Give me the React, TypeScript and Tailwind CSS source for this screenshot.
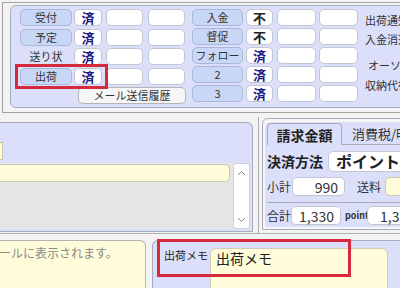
import React from 'react';

const FONT = { fontFamily: '"Noto Sans CJK JP", "Noto Sans", sans-serif' };

function Btn({ label, w }: { label: string; w: string }) {
  return (
    <div className={`${w} h-[17px] shrink-0 rounded-[5px] border border-[#a9b8d8] bg-[#c9d7f6] flex items-center justify-center text-[11px] leading-none text-[#333]`}>
      {label}
    </div>
  );
}

function Box({ w, children }: { w: string; children?: React.ReactNode }) {
  return (
    <div className={`${w} h-[17px] shrink-0 rounded-[5px] border border-[#c4c6d2] bg-white flex items-center justify-center`}>
      {children}
    </div>
  );
}

function Sumi() {
  return <span className="text-[13px] font-bold leading-none text-[#1b1b86]">済</span>;
}

function Fu() {
  return <span className="text-[13px] font-bold leading-none text-[#222]">不</span>;
}

const LEFT_ROWS: { label: string; plain?: boolean }[] = [
  { label: '受付' },
  { label: '予定' },
  { label: '送り状', plain: true },
  { label: '出荷' },
];

const RIGHT_ROWS: { label: string; mark: 'sumi' | 'fu' }[] = [
  { label: '入金', mark: 'fu' },
  { label: '督促', mark: 'fu' },
  { label: 'フォロー', mark: 'sumi' },
  { label: '2', mark: 'sumi' },
  { label: '3', mark: 'sumi' },
];

export default function App() {
  return (
    <div className="relative w-[400px] h-[288px] overflow-hidden bg-[#f3f3f3] text-[12px] text-[#333]" style={FONT}>
      {/* top status frame */}
      <div className="h-[113px] pt-[2px] pl-[2px]">
        <div className="h-[111px] w-[420px] border-t border-l border-b border-[#a3a3a3] pl-[7px] pt-[2px]">
          <div className="h-[103px] w-[420px] rounded-[6px] border border-[#a9abbd] bg-[#dcdffa] pl-[9px] pt-[3px] flex">
            {/* left group */}
            <div className="flex flex-col gap-[2.5px] w-[165px] shrink-0">
              {LEFT_ROWS.map((r) => (
                <div key={r.label} className="flex items-center">
                  {r.plain ? (
                    <div className="w-[52px] h-[17px] shrink-0 flex items-center justify-center text-[11px] leading-none">{r.label}</div>
                  ) : (
                    <Btn label={r.label} w="w-[52px]" />
                  )}
                  <div className="ml-[2px]"><Box w="w-[28px]"><Sumi /></Box></div>
                  <div className="ml-[4px]"><Box w="w-[37px]" /></div>
                  <div className="ml-[5px]"><Box w="w-[37px]" /></div>
                </div>
              ))}
              <div className="ml-[58px] w-[108px] h-[17px] rounded-[5px] border border-[#b5b5b5] bg-[#f6f6f6] flex items-center justify-center text-[11px] leading-none">
                メール送信履歴
              </div>
            </div>
            {/* right group */}
            <div className="ml-[7px] flex flex-col gap-[2px] w-[166px] shrink-0">
              {RIGHT_ROWS.map((r) => (
                <div key={r.label} className="flex items-center">
                  <Btn label={r.label} w="w-[51px]" />
                  <div className="ml-[3px]"><Box w="w-[27px]">{r.mark === 'sumi' ? <Sumi /> : <Fu />}</Box></div>
                  <div className="ml-[4px]"><Box w="w-[39px]" /></div>
                  <div className="ml-[3px]"><Box w="w-[39px]" /></div>
                </div>
              ))}
            </div>
            {/* notification labels */}
            <div className="ml-[7px] flex flex-col text-[11px] leading-none whitespace-nowrap shrink-0">
              <div className="mt-[6px]">出荷通知</div>
              <div className="mt-[8px]">入金消込</div>
              <div className="mt-[15px] ml-[3px]">オーソリ</div>
              <div className="mt-[9px]">収納代行</div>
            </div>
          </div>
        </div>
      </div>

      {/* middle section */}
      <div className="h-[120px] flex">
        <div className="w-[253px] pt-[9px] shrink-0">
          <div className="h-[110px] rounded-tr-[6px] border-t border-r border-b border-[#a9abbd] bg-[#dcdffa] flex flex-col">
            <div className="h-[40px] pt-[19px]">
              <div className="w-[3px] h-[18px] bg-[#fffcd9] border-r border-y border-[#c9c7a8]" />
            </div>
            <div className="flex h-[66px]">
              <div className="w-[233px] bg-[#e6e6e6] flex flex-col">
                <div className="h-[18px] w-[230px] mt-[1px] rounded-r-[5px] border border-l-0 border-[#c9c8b0] bg-[#fffcd9]" />
              </div>
              <div className="w-[17px] bg-white border border-[#d0d0d0] rounded-[3px] flex flex-col items-center justify-between py-[2px]">
                <svg width="9" height="6" viewBox="0 0 9 6" className="mt-[4px]"><path d="M1 5 L4.5 1.5 L8 5" fill="none" stroke="#888" strokeWidth="1" /></svg>
                <svg width="9" height="6" viewBox="0 0 9 6" className="mb-[3px]"><path d="M1 1 L4.5 4.5 L8 1" fill="none" stroke="#888" strokeWidth="1" /></svg>
              </div>
            </div>
          </div>
        </div>
        <div className="w-[9px] shrink-0 flex pt-[4px]">
          <div className="ml-[5px] w-px h-[116px] bg-[#b0b0b0]" />
        </div>
        <div className="pt-[5px] shrink-0">
          <div className="w-[170px] h-[112px] rounded-tl-[6px] border border-[#a9abbd] bg-[#f7f7f7] pl-[2px] pt-[3px]">
            <div className="h-[105px] rounded-tl-[6px] bg-[#dcdffa] pl-[2px] flex flex-col">
              {/* tabs */}
              <div className="flex h-[22px] mt-[1px]">
                <div className="w-[75px] shrink-0 rounded-t-[4px] border border-b-0 border-[#a9abbd] bg-[#dcdffa] flex items-center justify-center text-[14px] font-bold leading-none text-[#222]">
                  請求金額
                </div>
                <div className="flex-1 border-b border-[#a9abbd] rounded-tl-[4px] pl-[10px] flex items-center text-[13px] leading-none whitespace-nowrap text-[#333]">
                  消費税/明細
                </div>
              </div>
              {/* payment method */}
              <div className="flex items-center h-[30px] mt-[1px] whitespace-nowrap">
                <span className="shrink-0 text-[14px] font-bold leading-none text-[#222]">決済方法</span>
                <div className="ml-[5px] shrink-0 h-[21px] w-[110px] rounded-[5px] border border-[#c4c6d2] bg-white pl-[7px] flex items-center text-[16px] font-bold leading-none text-[#222]">
                  ポイント全額
                </div>
              </div>
              <div className="flex items-center h-[19px] mt-[1px] whitespace-nowrap">
                <span className="shrink-0 w-[25px] text-[12px] leading-none">小計</span>
                <div className="shrink-0 w-[53px] h-[19px] rounded-[5px] border border-[#c4c6d2] bg-white flex items-center justify-end pr-[6px] text-[14px] leading-none">990</div>
                <span className="shrink-0 ml-[12px] text-[12px] leading-none">送料</span>
                <div className="shrink-0 ml-[4px] w-[40px] h-[19px] rounded-[5px] border border-[#c9c8b0] bg-[#fffcd9]" />
              </div>
              <div className="h-px bg-[#a9abbd] mt-[6px]" />
              <div className="flex items-center h-[19px] mt-[3px] whitespace-nowrap">
                <span className="shrink-0 w-[24px] text-[12px] leading-none">合計</span>
                <div className="shrink-0 w-[50px] h-[19px] rounded-[5px] border border-[#c4c6d2] bg-white flex items-center justify-end pr-[6px] text-[14px] leading-none">1,330</div>
                <span className="shrink-0 ml-[4px] w-[22px] text-[9px] font-bold leading-none">point</span>
                <div className="shrink-0 w-[50px] h-[19px] rounded-[5px] border border-[#c4c6d2] bg-white flex items-center pl-[12px] text-[14px] leading-none">1,330</div>
              </div>
            </div>
          </div>
        </div>
      </div>

      {/* bottom section */}
      <div className="h-px bg-[#b0b0b0]" />
      <div className="flex pt-[6px]">
        <div className="w-[146px] h-[60px] shrink-0 rounded-tr-[6px] border-t border-r border-[#b5b5b5] bg-[#fffcd9] pt-[6px] text-[12px] leading-none text-[#8a8a8a] whitespace-nowrap overflow-hidden">
          <span className="ml-[-13px]">メールに表示されます。</span>
        </div>
        <div className="ml-[6px] w-[260px] h-[60px] rounded-tl-[6px] border-t border-l border-[#a9abbd] bg-[#dcdffa] flex">
          <div className="w-[57px] shrink-0 pt-[9px] pl-[11px] text-[11px] leading-none whitespace-nowrap text-[#222]">出荷メモ</div>
          <div className="mt-[7px] w-[178px] shrink-0 rounded-t-[6px] border border-[#cfcdb5] bg-[#fffcd9] pl-[5px] pt-[1px] text-[14px] leading-tight text-[#222]">
            出荷メモ
          </div>
        </div>
      </div>

      {/* highlight boxes */}
      <div className="absolute left-[15px] top-[64px] w-[93px] h-[25px] border-[3px] border-[#d42a3c]" />
      <div className="absolute left-[157px] top-[239px] w-[194px] h-[38px] border-[3px] border-[#d42a3c]" />
    </div>
  );
}
